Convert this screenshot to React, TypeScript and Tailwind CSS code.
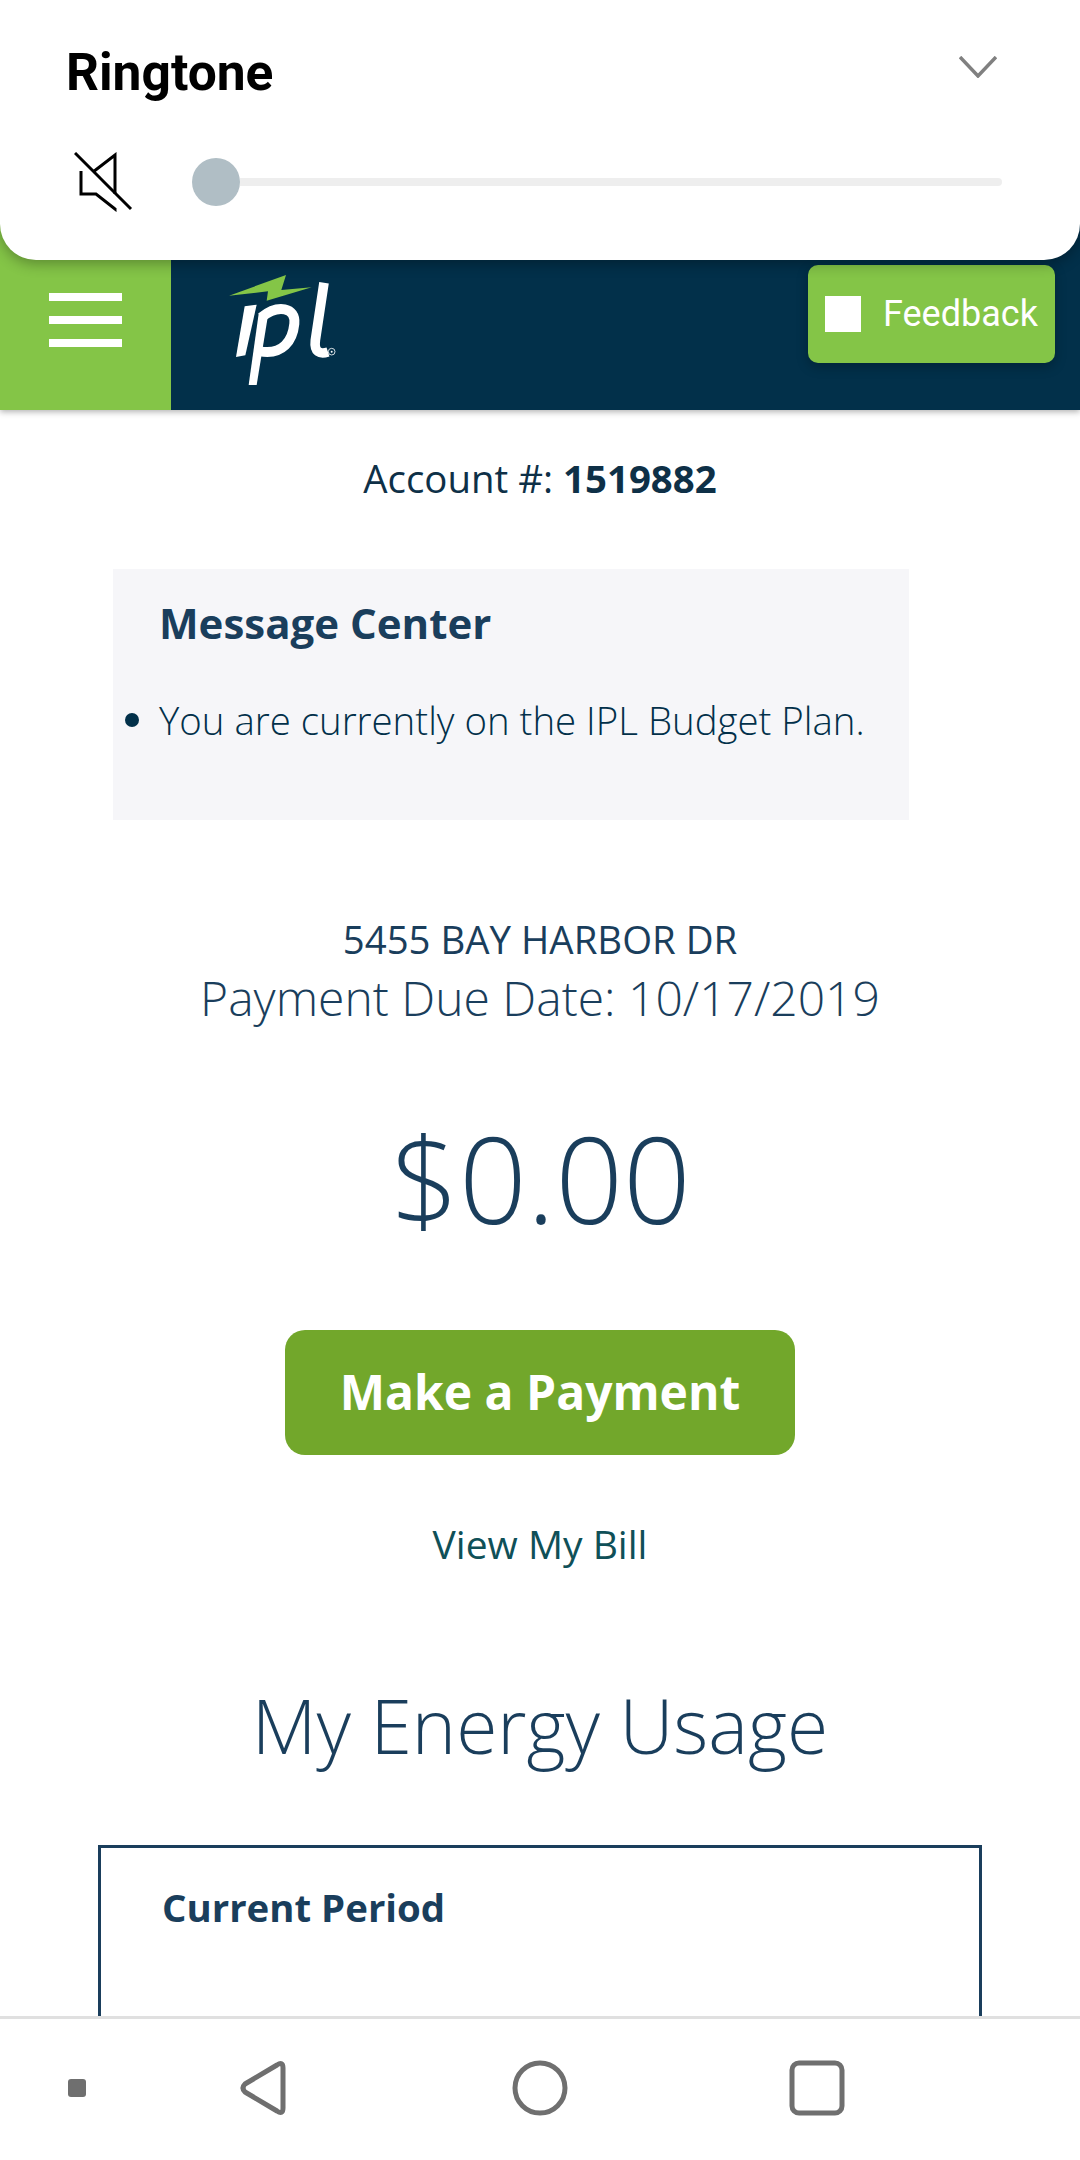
import React from "react";

const openSans = { fontFamily: '"Open Sans", sans-serif' };

function MuteIcon() {
    return (
        <svg width="60" height="60" viewBox="0 0 60 60" fill="none" stroke="#000" strokeWidth="3">
            <path d="M1 1 L57 57" />
            <path d="M7 19 V42 H22 L41 57 V56" />
            <path d="M19 20 L41 3 V42" />
        </svg>
    );
}

function IplLogo() {
    return (
        <svg width="120" height="120" viewBox="0 0 360 360" fill="none">
            <path d="M3 71 L174 9 L160 54 L251 46 L116 86 L120 58 Z" fill="#84c547" />
            <path d="M50 103 L86 98 L52 250 L24 255 Z" fill="#fff" />
            <path d="M122 118 L86 339 L62 339 L92 125 Z" fill="#fff" />
            <path d="M100 136 C150 96 204 106 199 155 C194 205 165 250 96 238" stroke="#fff" strokeWidth="30" />
            <path d="M288 32 L262 205 C258 240 275 248 300 240" stroke="#fff" strokeWidth="29" />
            <circle cx="311" cy="239" r="10" stroke="#fff" strokeWidth="2.5" />
            <circle cx="311" cy="239" r="3" fill="#fff" />
        </svg>
    );
}

export default function App() {
    return (
        <div className="relative flex h-[2160px] w-[1080px] flex-col overflow-hidden bg-white text-[#0e3047]" style={openSans}>
            {/* volume sheet */}
            <div className="absolute left-0 top-0 z-10 h-[260px] w-full rounded-b-[36px] bg-white shadow-[0_4px_14px_rgba(0,0,0,0.3)]" style={{ fontFamily: "Roboto, sans-serif" }}>
                <div className="flex items-start justify-between pl-[66px] pr-[83px] pt-[45px]">
                    <div className="text-[51.5px] font-bold leading-[56px] text-black">Ringtone</div>
                    <svg width="38" height="22" viewBox="0 0 38 22" fill="none" stroke="#808080" strokeWidth="3.5" className="mt-[11px]">
                        <path d="M1 1 L19 20 L37 1" />
                    </svg>
                </div>
                <div className="mt-[51px] flex items-center pl-[74px] pr-[78px]">
                    <MuteIcon />
                    <div className="ml-[58px] flex flex-1 items-center">
                        <div className="h-[48px] w-[48px] shrink-0 rounded-full bg-[#b0bec5]" />
                        <div className="h-[8px] flex-1 rounded-r-full bg-[#eeeeee]" />
                    </div>
                </div>
            </div>

            {/* site header */}
            <div className="flex h-[410px] shrink-0 bg-[#02304a] shadow-[0_2px_6px_rgba(0,0,0,0.3)]">
                <div className="flex w-[171px] flex-col items-center gap-[15px] bg-[#84c547] pt-[293px]">
                    <div className="h-[8px] w-[73px] bg-white" />
                    <div className="h-[8px] w-[73px] bg-white" />
                    <div className="h-[8px] w-[73px] bg-white" />
                </div>
                <div className="ml-[57px] pt-[272px]">
                    <IplLogo />
                </div>
                <div className="ml-auto mr-[25px] mt-[265px] flex h-[98px] w-[247px] items-center rounded-[10px] bg-[#84c547] pl-[17px] shadow-[0_4px_12px_rgba(0,0,0,0.25)]" style={{ fontFamily: "Roboto, sans-serif" }}>
                    <div className="h-[36px] w-[36px] bg-white" />
                    <span className="ml-[22px] text-[36px] leading-[42px] text-white">Feedback</span>
                </div>
            </div>

            <div className="flex flex-1 flex-col items-center overflow-hidden">
                <div className="mt-[43px] text-[38.4px] leading-[50px] text-[#0e3047]">
                    Account #: <span className="font-bold">1519882</span>
                </div>

                <div className="mt-[66px] ml-[113px] h-[251px] w-[796px] self-start bg-[#f6f6f9] pl-[46px] pt-[27px]">
                    <div className="text-[42px] font-bold leading-[54px] text-[#1a3e5c]">Message Center</div>
                    <div className="mt-[43px] flex items-center">
                        <div className="-ml-[34px] h-[14px] w-[14px] rounded-full bg-[#02304a]" />
                        <div className="ml-[20px] text-[38.4px] font-light leading-[54px] text-[#02304a]">You are currently on the IPL Budget Plan.</div>
                    </div>
                </div>

                <div className="mt-[94px] text-[38.4px] leading-[50px] text-[#1a3e5c]">5455 BAY HARBOR DR</div>
                <div className="mt-[3px] text-[48px] font-light leading-[62px] text-[#1a3e5c]">Payment Due Date: 10/17/2019</div>
                <div className="ml-[2px] mt-[74px] text-[119px] font-light leading-[150px] text-[#1a3e5c]">$0.00</div>
                <div className="mt-[77px] flex h-[125px] w-[510px] shrink-0 items-center justify-center rounded-[20px] bg-[#72a72b] pb-[2px] text-[48px] font-bold text-white">Make a Payment</div>
                <div className="mt-[59px] text-[39px] leading-[60px] text-[#0f5058]">View My Bill</div>
                <div className="mt-[101px] text-[75px] font-light leading-[100px] text-[#1a3e5c]">My Energy Usage</div>
                <div className="mt-[70px] w-[884px] flex-1 border-x-[3px] border-t-[3px] border-[#1a3e5c] pl-[61px] pt-[34px]">
                    <div className="text-[38.4px] font-bold leading-[50px] text-[#1a3e5c]">Current Period</div>
                </div>
            </div>

            {/* android nav bar */}
            <div className="h-[144px] shrink-0 border-t-[3px] border-[#e0e0e0] bg-white pb-[4px]">
                <div className="flex h-full items-center">
                    <div className="ml-[68px] h-[18px] w-[18px] rounded-[3px] bg-[#6f6f6f]" />
                    <svg width="50" height="56" viewBox="0 0 50 56" fill="none" stroke="#6f6f6f" strokeWidth="5" strokeLinejoin="round" className="ml-[153px]">
                        <path d="M38 5 Q44 1 44 8 V48 Q44 55 38 51 L6 32 Q2 28 6 24 Z" />
                    </svg>
                    <svg width="58" height="58" viewBox="0 0 58 58" fill="none" stroke="#6f6f6f" strokeWidth="5" className="ml-[222px]">
                        <circle cx="29" cy="29" r="25" />
                    </svg>
                    <svg width="56" height="56" viewBox="0 0 56 56" fill="none" stroke="#6f6f6f" strokeWidth="5" className="ml-[220px]">
                        <rect x="3" y="3" width="50" height="50" rx="7" />
                    </svg>
                </div>
            </div>
        </div>
    );
}
